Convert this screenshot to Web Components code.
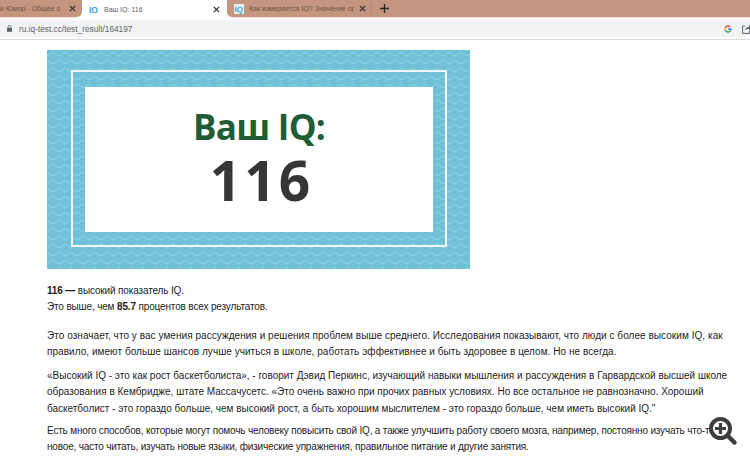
<!DOCTYPE html>
<html lang="ru">
<head>
<meta charset="utf-8">
<title>Ваш IQ: 116</title>
<style>
  html, body { margin: 0; padding: 0; height: 458px; overflow: hidden; background: #fff; }
  body { font-family: "Liberation Sans", Arial, sans-serif; }
</style>
</head>
<body>
<template id="tab-tpl">
  <style>
    :host {
      display: flex;
      align-items: center;
      height: 17px;
      box-sizing: border-box;
      font: 7px "Liberation Sans", Arial, sans-serif;
      color: #6a5248;
      background: #c49680;
      overflow: hidden;
      flex: none;
      gap: 5px;
      position: relative;
    }
    :host([active]) {
      position: static;
      height: 18px;
      background: #fff;
      color: #5a6068;
      overflow: visible;
      box-shadow: -6px 0 0 #fff, 6px 0 0 #fff;
    }
    :host([side="left"]) { border-bottom-right-radius: 5px; }
    :host([side="right"]) { border-bottom-left-radius: 5px; }
    .label { flex: 1; white-space: nowrap; overflow: hidden; min-width: 0; }
    .x { flex: none; width: 7px; height: 7px; display: block; }
    ::slotted(svg) { flex: none; display: block; }
  </style>
  <slot name="icon"></slot>
  <span class="label"><slot></slot></span>
  <svg class="x" viewBox="0 0 7 7"><path d="M.8.8l5.400 5.400M6.200.8L.8 6.200" stroke="#33302e" stroke-width="1.200" fill="none"/></svg>
</template>

<template id="tabstrip-tpl">
  <style>
    :host { display: flex; height: 18px; margin-bottom: 2px; box-sizing: border-box; background: #c49680; align-items: flex-start; border-bottom: 1px solid #f3e2da; }
    .plus { width: 9px; height: 9px; margin: 4px 0 0 9px; flex: none; }
    .sep { width: 1px; height: 11px; margin: 3px 0 0 0; background: #ae8874; flex: none; }
  </style>
  <slot></slot>
  <span class="sep"></span>
  <svg class="plus" viewBox="0 0 9 9"><path d="M4.500 0v9M0 4.500h9" stroke="#2a2522" stroke-width="1.400" fill="none"/></svg>
</template>

<template id="addressbar-tpl">
  <style>
    :host { display: flex; align-items: center; height: 17px; box-sizing: border-box; background: #f1f3f4; font: 8.3px "Liberation Sans", Arial, sans-serif; color: #5f6368; padding-left: 7px; overflow: hidden; }
    .lock { width: 5px; height: 7px; margin-right: 7px; flex: none; }
    .url { flex: 1; white-space: nowrap; }
    .g { width: 8px; height: 8px; margin-right: 10px; flex: none; }
    .share { width: 10px; height: 10px; flex: none; margin-right: -2px; }
  </style>
  <svg class="lock" viewBox="0 0 6 8"><rect x="0" y="3" width="6" height="5" rx=".7" fill="#5f6368"/><path d="M1.300 3.200V2a1.700 1.700 0 0 1 3.400 0v1.200" fill="none" stroke="#5f6368"/></svg>
  <span class="url"><slot></slot></span>
  <svg class="g" viewBox="0 0 48 48"><path fill="#4285f4" d="M45 24.500c0-1.600-.1-3.100-.4-4.500H24v8.500h11.800c-.5 2.700-2 5-4.400 6.600l7 5.400C42.500 36.600 45 31 45 24.500z"/><path fill="#34a853" d="M24 46c5.900 0 10.900-2 14.500-5.300l-7-5.400c-2 1.300-4.500 2.100-7.500 2.100-5.700 0-10.600-3.900-12.300-9.100l-7.300 5.600C7.900 41.100 15.400 46 24 46z"/><path fill="#fbbc05" d="M11.700 28.300c-.9-2.700-.9-5.700 0-8.500l-7.300-5.600c-3 6-3 13.700 0 19.700z"/><path fill="#ea4335" d="M24 10.700c3.200 0 6.100 1.100 8.400 3.300l6.300-6.300C34.900 4.100 29.900 2 24 2 15.400 2 7.900 6.900 4.400 14.200l7.300 5.600c1.700-5.200 6.600-9.100 12.300-9.100z"/></svg>
  <svg class="share" viewBox="0 0 10 10"><path d="M3 2H.6v7.400h7V7" fill="none" stroke="#5f6368"/><path d="M2.800 6.500C3 4 5 3 7 3V1l3 3-3 3V5C5.300 5 3.800 5.300 2.800 6.500z" fill="#5f6368"/></svg>
</template>

<template id="result-banner-tpl">
  <style>
    :host {
      display: flex;
      width: 423px;
      height: 219px;
      box-sizing: border-box;
      padding: 20px 23px 22px 24px;
      background-color: #70c0d8;
      background-image: url("data:image/svg+xml,%3Csvg xmlns='http://www.w3.org/2000/svg' width='12' height='16'%3E%3Cpath d='M0 6l6-4 6 4M-6 14l6-4 6 4 6-4 6 4' fill='none' stroke='%2392d3e5' stroke-width='1'/%3E%3C/svg%3E");
    }
    .frame { flex: 1; display: flex; padding: 15px 12px 13px; border: 2px solid #eef8fb; }
    .card { flex: 1; background: #fff; display: flex; flex-direction: column; align-items: center; font-family: "Open Sans", "Noto Sans", sans-serif; font-weight: 700; }
    .title { color: #1f5d36; font-size: 35px; line-height: 38px; margin-top: 21px; letter-spacing: -.7px; white-space: nowrap; }
    .score { color: #363636; font-size: 55px; line-height: 52px; margin-top: 8px; padding-left: 5px; letter-spacing: 3px; }
  </style>
  <div class="frame">
    <div class="card">
      <div class="title"><slot name="title"></slot></div>
      <div class="score"><slot name="score"></slot></div>
    </div>
  </div>
</template>

<template id="zoom-tool-tpl">
  <style>
    :host { position: fixed; left: 708px; top: 417px; width: 30px; height: 30px; display: block; }
    svg { display: block; }
  </style>
  <svg width="30" height="30" viewBox="0 0 30 30">
    <circle cx="12.500" cy="11.500" r="9.500" fill="#fff" stroke="#3d3d3d" stroke-width="4"/>
    <path d="M12.500 6v11M7 11.500h11" stroke="#3d3d3d" stroke-width="3.200"/>
    <path d="M20 19L26.500 25.500" stroke="#3d3d3d" stroke-width="4.500" stroke-linecap="round"/>
  </svg>
</template>

<template id="article-tpl">
  <style>
    :host { display: block; padding: 10px 0 0 47px; width: 684px; box-sizing: content-box; font: 10px/16.3px "Liberation Sans", Arial, sans-serif; color: #1d1d1d; }
    ::slotted(p) { margin: 0; }
  </style>
  <slot name="banner"></slot>
  <slot></slot>
</template>

<browser-tabs>
  <browser-tab side="left" style="width:82px;padding-right:6px">и Юмор - Общее о</browser-tab>
  <browser-tab active style="width:145px;padding-left:7px;padding-right:7px"><svg slot="icon" width="10" height="8" viewBox="0 0 10 8"><text x="0" y="7.500" font-family="Liberation Sans" font-weight="700" font-size="8.500" fill="#32a8dc">IQ</text></svg>Ваш IQ: 116</browser-tab>
  <browser-tab side="right" style="width:143px;padding-left:7px;padding-right:4px"><svg slot="icon" width="10" height="10" viewBox="0 0 10 10"><rect width="10" height="10" fill="#e8eef0"/><text x="0.500" y="8" font-family="Liberation Sans" font-weight="700" font-size="8" fill="#32a8dc">IQ</text></svg>Как измеряется IQ? Значение ср</browser-tab>
</browser-tabs>
<address-bar>ru.iq-test.cc/test_result/164197</address-bar>
<div style="height:1px;margin-top:2px;background:#dadce0"></div>
<iq-article>
  <iq-result-banner slot="banner"><span slot="title">Ваш IQ:</span><span slot="score">116</span></iq-result-banner>
  <p style="margin:14px 0 12px;letter-spacing:-.15px"><b>116 —</b> высокий показатель IQ.<br>Это выше, чем <b>85.7</b> процентов всех результатов.</p>
  <p style="margin-bottom:8px;letter-spacing:.05px">Это означает, что у вас умения рассуждения и решения проблем выше среднего. Исследования показывают, что люди с более высоким IQ, как правило, имеют больше шансов лучше учиться в школе, работать эффективнее и быть здоровее в целом. Но не всегда.</p>
  <p style="margin-bottom:6px">«Высокий IQ - это как рост баскетболиста», - говорит Дэвид Перкинс, изучающий навыки мышления и рассуждения в Гарвардской высшей школе образования в Кембридже, штате Массачусетс. «Это очень важно при прочих равных условиях. Но все остальное не равнозначно. Хороший баскетболист - это гораздо больше, чем высокий рост, а быть хорошим мыслителем - это гораздо больше, чем иметь высокий IQ."</p>
  <p style="letter-spacing:-.18px">Есть много способов, которые могут помочь человеку повысить свой IQ, а также улучшить работу своего мозга, например, постоянно изучать что-то новое, часто читать, изучать новые языки, физические упражнения, правильное питание и другие занятия.</p>
</iq-article>
<zoom-tool></zoom-tool>

<script>
// every element just clones its template into an open shadow root
function simple(tag, tplId) {
  customElements.define(tag, class extends HTMLElement {
    constructor() {
      super();
      this.attachShadow({ mode: 'open' }).appendChild(document.getElementById(tplId).content.cloneNode(true));
    }
  });
}
simple('browser-tab', 'tab-tpl');
simple('browser-tabs', 'tabstrip-tpl');
simple('address-bar', 'addressbar-tpl');
simple('iq-result-banner', 'result-banner-tpl');
simple('iq-article', 'article-tpl');
simple('zoom-tool', 'zoom-tool-tpl');
</script>
</body>
</html>
